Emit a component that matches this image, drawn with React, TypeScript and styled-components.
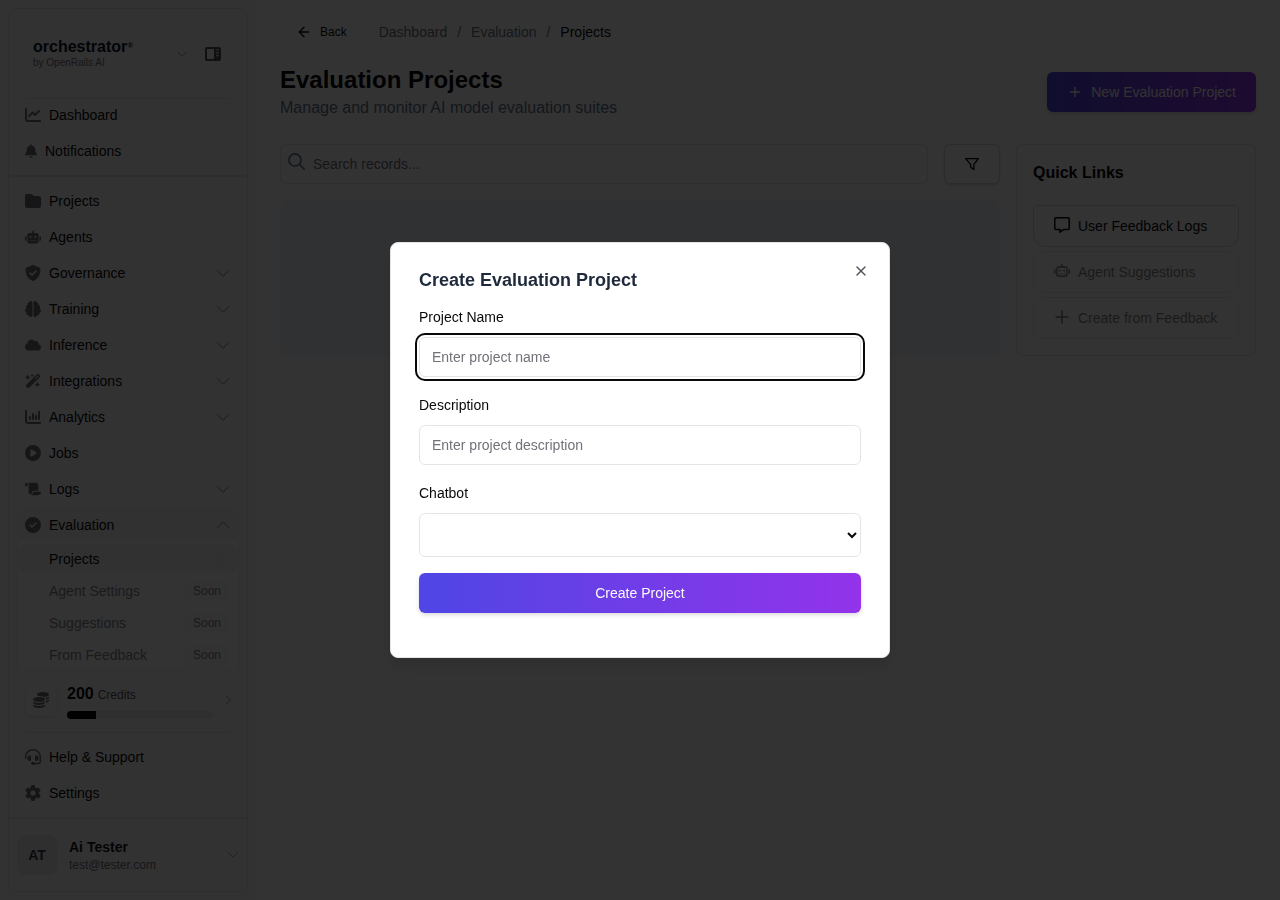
import React from "react";
import styled, { createGlobalStyle, css } from "styled-components";
import { ArrowLeft, Plus, X } from "lucide-react";
import {
  FaBell,
  FaBrain,
  FaChartColumn,
  FaChartLine,
  FaCircleCheck,
  FaCirclePlay,
  FaCloud,
  FaCoins,
  FaFolder,
  FaGear,
  FaHeadset,
  FaRobot,
  FaScroll,
  FaWandMagicSparkles,
} from "react-icons/fa6";

const GlobalStyle = createGlobalStyle`
  *, *::before, *::after { box-sizing: border-box; }
  body {
    margin: 0;
    background: #ffffff;
    color: #09090b;
    font-family: "Liberation Sans", Arial, sans-serif;
    font-size: 14px;
    line-height: 20px;
  }
  h1, h2, h3, p, ul { margin: 0; padding: 0; }
  ul { list-style: none; }
  button, input, select { font: inherit; color: inherit; }
  a { color: inherit; text-decoration: none; }
  svg { display: block; flex-shrink: 0; }
`;

/* ---------- icons ---------- */

const ChevronIcon = styled.svg<{ $turn?: number; $small?: boolean }>`
  width: ${(p) => (p.$small ? 10 : 14)}px;
  height: ${(p) => (p.$small ? 10 : 14)}px;
  fill: none;
  stroke: #71717a;
  stroke-linecap: round;
  stroke-linejoin: round;
  transform: rotate(${(p) => p.$turn ?? 0}deg);
`;

const Chevron = ({ turn, small }: { turn?: number; small?: boolean }) => (
  <ChevronIcon $turn={turn} $small={small} viewBox="0 0 14 14">
    <path d="M1 4.2 7 10.2 13 4.2" strokeWidth={small ? 1 : 0.8} />
  </ChevronIcon>
);

const PanelIcon = () => (
  <svg width="16" height="16" viewBox="0 0 16 16">
    <path
      fillRule="evenodd"
      d="M2 1h12a2 2 0 0 1 2 2v10a2 2 0 0 1-2 2H2a2 2 0 0 1-2-2V3a2 2 0 0 1 2-2Zm0 2v10h7V3Zm9 .6v1h3v-1Zm0 2.8v1h3v-1Zm0 2.8v1h3v-1Z"
      fill="currentColor"
    />
  </svg>
);

const ShieldCheckIcon = () => (
  <svg width="16" height="16" viewBox="0 0 16 16">
    <path
      d="M8 0c.2 0 .3 0 .4.1l5.9 2.5c.7.3 1.2 1 1.2 1.8 0 3.1-1.3 8.800-6.700 11.400a1.900 1.900 0 0 1-1.600 0C1.800 13.200.5 7.500.5 4.400c0-.8.5-1.500 1.200-1.800L7.600.1C7.700 0 7.800 0 8 0Z"
      fill="currentColor"
    />
    <path d="m5 8.100 2.100 2L11 6.100" fill="none" stroke="#fafafa" strokeWidth="1.500" strokeLinecap="round" strokeLinejoin="round" />
  </svg>
);

const SearchIcon = () => (
  <svg width="17" height="17" viewBox="0 0 16 16" fill="none" stroke="#64748b" strokeWidth="1.500" strokeLinecap="round">
    <circle cx="6.500" cy="6.500" r="5.700" />
    <path d="m10.800 10.800 4.400 4.400" />
  </svg>
);

const FilterIcon = () => (
  <svg width="16" height="16" viewBox="0 0 16 16" fill="none" stroke="currentColor" strokeWidth="1.300" strokeLinejoin="round">
    <path d="M1.600 2.600h12.800L9.900 8.400v5.200L6.600 11.200V8.400Z" />
  </svg>
);

const CommentIcon = () => (
  <svg width="16" height="16" viewBox="0 0 16 16" fill="none" stroke="currentColor" strokeWidth="1.500" strokeLinejoin="round">
    <path d="M1.800.8h12.400a1 1 0 0 1 1 1v9.800a1 1 0 0 1-1 1H9.300L6 15.200v-2.600H1.800a1 1 0 0 1-1-1V1.800a1 1 0 0 1 1-1Z" />
  </svg>
);

const RobotIcon = () => (
  <svg width="16" height="16" viewBox="0 0 16 16" fill="none" stroke="currentColor" strokeWidth="1.400" strokeLinecap="round">
    <rect x="2.900" y="4" width="10.200" height="9.300" rx="2" />
    <path d="M8 1.500v2.500M.7 7v3.200M15.300 7v3.200" />
    <path d="M5.300 11h.7M7.700 11h.7M10.100 11h.7" strokeWidth="1.100" />
    <circle cx="5.800" cy="7.600" r=".7" fill="currentColor" strokeWidth=".8" />
    <circle cx="10.200" cy="7.600" r=".7" fill="currentColor" strokeWidth=".8" />
  </svg>
);

const ThinPlusIcon = () => (
  <svg width="16" height="16" viewBox="0 0 16 16" fill="none" stroke="currentColor" strokeWidth="1.500" strokeLinecap="round">
    <path d="M8 2v12M2 8h12" />
  </svg>
);

/* ---------- shell ---------- */

const Shell = styled.div`
  display: flex;
  min-height: 100vh;
`;

const SidebarFrame = styled.aside`
  flex: 0 0 256px;
  height: 100vh;
  padding: 8px;
  background: #fafafa;
  position: sticky;
  top: 0;
`;

const SidebarCard = styled.div`
  display: flex;
  flex-direction: column;
  height: 100%;
  border: 1px solid #e5e5e5;
  border-radius: 8px;
  overflow: hidden;
`;

const Brand = styled.div`
  display: flex;
  align-items: center;
  justify-content: space-between;
  flex: 0 0 89px;
  padding: 0 26px 0 24px;
`;

const BrandName = styled.div`
  color: #0f172a;
  font-size: 16px;
  font-weight: 700;
  line-height: 18px;

  sup {
    font-size: 8px;
    line-height: 0;
    vertical-align: 4px;
  }
`;

const BrandBy = styled.div`
  color: #71717a;
  font-size: 10px;
  line-height: 14px;
`;

const BrandTools = styled.div`
  display: flex;
  align-items: center;
  gap: 18px;
`;

const IconButton = styled.button`
  display: flex;
  padding: 0;
  border: 0;
  background: none;
  color: #52525b;
  cursor: pointer;
`;

const Rule = styled.hr<{ $inset?: boolean }>`
  flex: 0 0 auto;
  width: auto;
  height: ${(p) => (p.$inset ? 1 : 2)}px;
  margin: ${(p) => (p.$inset ? "0 16px" : "0")};
  border: 0;
  background: #e5e5e5;
`;

const NavGroup = styled.ul<{ $scroll?: boolean; $flush?: boolean }>`
  display: flex;
  flex-direction: column;
  gap: 4px;
  flex: ${(p) => (p.$scroll ? "1 1 0" : "0 0 auto")};
  min-height: 0;
  padding: ${(p) => (p.$flush ? "0 8px 8px" : p.$scroll ? "8px 8px 0" : "8px")};
  overflow: hidden;
`;

const NavLink = styled.a<{ $open?: boolean }>`
  display: flex;
  align-items: center;
  gap: 8px;
  height: 32px;
  padding: 0 9px 0 8px;
  border-radius: 6px;
  background: ${(p) => (p.$open ? "#f4f4f5" : "transparent")};

  > svg:first-child {
    color: #71717a;
  }
`;

const NavLabel = styled.span`
  flex: 1;
`;

const SubNav = styled.ul`
  display: flex;
  flex-direction: column;
  gap: 4px;
  padding: 4px 1px;
  border: solid #f0f0f0;
  border-width: 0 1px;
  background: #ffffff;
`;

const SubLink = styled.a<{ $active?: boolean }>`
  display: flex;
  align-items: center;
  justify-content: space-between;
  height: 28px;
  padding: 0 8px 0 30px;
  border-radius: 6px;
  background: ${(p) => (p.$active ? "#f4f4f5" : "transparent")};
  color: ${(p) => (p.$active ? "#09090b" : "#84848a")};
`;

const FaintChevron = styled.span`
  opacity: 0.2;
`;

const Soon = styled.span`
  padding: 0 8px;
  border-radius: 4px;
  background: #f8f8f9;
  font-size: 12px;
  line-height: 20px;
`;

const Credits = styled.a`
  display: flex;
  align-items: center;
  gap: 10px;
  flex: 0 0 64px;
  padding: 0 14px 0 16px;
`;

const CoinTile = styled.span`
  display: flex;
  align-items: center;
  justify-content: center;
  width: 32px;
  height: 32px;
  border-radius: 6px;
  background: #fafafa;
  box-shadow: 0 1px 3px rgba(0, 0, 0, 0.15);
  color: #71717a;
`;

const CreditInfo = styled.span`
  flex: 1;
`;

const CreditText = styled.span`
  display: flex;
  align-items: baseline;
  gap: 4px;
  margin-bottom: 4px;
  color: #52525b;
  font-size: 12px;
  line-height: 24px;

  strong {
    color: #09090b;
    font-size: 16px;
  }
`;

const Meter = styled.span`
  display: block;
  height: 8px;
  border-radius: 4px;
  background: #e8e8ea;
  overflow: hidden;
`;

const MeterFill = styled.span`
  display: block;
  height: 100%;
  background: #09090b;
`;

const Account = styled.button`
  display: flex;
  align-items: center;
  gap: 12px;
  flex: 0 0 72px;
  padding: 0 9px 0 8px;
  border: 0;
  background: none;
  text-align: left;
  cursor: pointer;
`;

const Avatar = styled.span`
  display: flex;
  align-items: center;
  justify-content: center;
  width: 40px;
  height: 40px;
  border-radius: 8px;
  background: #e9e9eb;
  color: #3f3f46;
  font-weight: 700;
`;

const AccountText = styled.span`
  flex: 1;
  color: #71717a;
  font-size: 12px;
  line-height: 16px;

  strong {
    display: block;
    color: #18181b;
    font-size: 14px;
    line-height: 20px;
  }
`;

/* ---------- main ---------- */

const Main = styled.main`
  flex: 1;
  min-width: 0;
  padding: 16px 24px;
`;

const TopBar = styled.div`
  display: flex;
  align-items: center;
  gap: 16px;
  margin-bottom: 16px;
`;

const BackButton = styled.button`
  display: flex;
  align-items: center;
  gap: 8px;
  height: 32px;
  padding: 0 16px;
  border: 0;
  background: none;
  font-size: 12px;
  cursor: pointer;
`;

const Crumbs = styled.nav`
  display: flex;
  gap: 10px;
  color: #71717a;
`;

const CrumbLink = styled.a<{ $slate?: boolean }>`
  color: ${(p) => (p.$slate ? "#64748b" : "#71717a")};
`;

const CrumbCurrent = styled.span`
  color: #09090b;
`;

const PageHead = styled.header`
  display: flex;
  align-items: center;
  justify-content: space-between;
  margin-bottom: 24px;
`;

const PageTitle = styled.h1`
  color: #09090b;
  font-size: 24px;
  line-height: 32px;
`;

const PageIntro = styled.p`
  color: #64748b;
  font-size: 16px;
  line-height: 24px;
`;

const PrimaryButton = styled.button<{ $wide?: boolean }>`
  display: flex;
  align-items: center;
  justify-content: center;
  gap: 8px;
  width: ${(p) => (p.$wide ? "100%" : "auto")};
  height: 40px;
  padding: 0 20px;
  border: 0;
  border-radius: 6px;
  background: linear-gradient(to right, #4f46e5, #9333ea);
  box-shadow: 0 2px 4px rgba(0, 0, 0, 0.15);
  color: #fafafa;
  cursor: pointer;
`;

const Columns = styled.div`
  display: grid;
  grid-template-columns: minmax(0, 1fr) 240px;
  gap: 16px;
`;

const Records = styled.section`
  display: flex;
  flex-direction: column;
  gap: 16px;
`;

const SearchRow = styled.div`
  display: flex;
  gap: 16px;
`;

const SearchBox = styled.label`
  display: flex;
  flex: 1;
  gap: 8px;
  height: 40px;
  padding: 0 7px;
  border: 1px solid #e5e5e5;
  border-radius: 6px;

  svg {
    margin-top: 8px;
  }
`;

const SearchInput = styled.input`
  flex: 1;
  min-width: 0;
  padding: 0;
  border: 0;
  background: none;
  outline: none;

  &::placeholder {
    color: #71717a;
    opacity: 1;
  }
`;

const FilterButton = styled.button`
  display: flex;
  align-items: center;
  justify-content: center;
  width: 56px;
  height: 40px;
  border: 1px solid #dcdcdf;
  border-radius: 6px;
  background: #ffffff;
  box-shadow: 0 1px 2px rgba(0, 0, 0, 0.15);
  cursor: pointer;
`;

const EmptyPanel = styled.div`
  flex: 1;
  border-radius: 6px;
  background: #f1f5f9;
`;

const QuickCard = styled.section`
  padding: 16px;
  border: 1px solid #e5e5e5;
  border-radius: 6px;
`;

const QuickTitle = styled.h3`
  margin-bottom: 20px;
  font-size: 16px;
  line-height: 24px;
`;

const QuickList = styled.div`
  display: flex;
  flex-direction: column;
  gap: 4px;
`;

const QuickButton = styled.button`
  display: flex;
  align-items: center;
  gap: 8px;
  height: 42px;
  padding: 0 20px;
  border: 1px solid #d4d4d8;
  border-radius: 12px;
  background: none;
  white-space: nowrap;
  cursor: pointer;

  svg {
    margin-bottom: 2px;
  }
  &:first-child {
    border-top-left-radius: 6px;
    border-top-right-radius: 6px;
  }
  &:last-child {
    border-bottom-left-radius: 6px;
    border-bottom-right-radius: 6px;
  }
  &:disabled {
    opacity: 0.5;
  }
`;

/* ---------- dialog ---------- */

const Overlay = styled.div`
  position: fixed;
  inset: 0;
  display: flex;
  align-items: center;
  justify-content: center;
  background: rgba(0, 0, 0, 0.8);
`;

const Dialog = styled.div`
  position: relative;
  width: 500px;
  max-width: 100%;
  padding: 28px 28px 44px;
  border: 1px solid #e4e4e7;
  border-radius: 8px;
  background: #ffffff;
  box-shadow: 0 10px 15px rgba(0, 0, 0, 0.1);
`;

const CloseButton = styled(IconButton)`
  position: absolute;
  top: 20px;
  right: 20px;
  color: #52525b;
`;

const DialogTitle = styled.h2`
  margin-bottom: 18px;
  color: #1e293b;
  font-size: 18px;
  line-height: 18px;
`;

const Field = styled.div`
  display: flex;
  flex-direction: column;
  gap: 10px;
  margin-bottom: 18px;

  &:last-of-type {
    margin-bottom: 16px;
  }
`;

const control = css`
  width: 100%;
  border: 1px solid #e4e4e7;
  border-radius: 6px;
  background: #ffffff;

  &:focus {
    outline: 2px solid #09090b;
    outline-offset: 2px;
  }
`;

const TextInput = styled.input`
  ${control}
  height: 40px;
  padding: 0 12px;

  &::placeholder {
    color: #71717a;
    opacity: 1;
  }
`;

const SelectInput = styled.select`
  ${control}
  height: 44px;
`;

/* ---------- data ---------- */

type NavEntry = { label: string; icon: React.ReactNode; fold?: boolean; open?: boolean };

const mainNav: NavEntry[] = [
  { label: "Projects", icon: <FaFolder size={16} /> },
  { label: "Agents", icon: <FaRobot size={16} /> },
  { label: "Governance", icon: <ShieldCheckIcon />, fold: true },
  { label: "Training", icon: <FaBrain size={16} />, fold: true },
  { label: "Inference", icon: <FaCloud size={16} />, fold: true },
  { label: "Integrations", icon: <FaWandMagicSparkles size={16} />, fold: true },
  { label: "Analytics", icon: <FaChartColumn size={16} />, fold: true },
  { label: "Jobs", icon: <FaCirclePlay size={16} /> },
  { label: "Logs", icon: <FaScroll size={16} />, fold: true },
  { label: "Evaluation", icon: <FaCircleCheck size={16} />, fold: true, open: true },
];

const soonLinks = ["Agent Settings", "Suggestions", "From Feedback"];

const NavItem = ({ label, icon, fold, open }: NavEntry) => (
  <NavLink href="#" $open={open}>
    {icon}
    <NavLabel>{label}</NavLabel>
    {fold && <Chevron turn={open ? 180 : 0} />}
  </NavLink>
);

const Sidebar = () => (
  <SidebarFrame>
    <SidebarCard>
      <Brand>
        <div>
          <BrandName>
            orchestrator<sup>®</sup>
          </BrandName>
          <BrandBy>by OpenRails AI</BrandBy>
        </div>
        <BrandTools>
          <Chevron small />
          <IconButton aria-label="Toggle sidebar">
            <PanelIcon />
          </IconButton>
        </BrandTools>
      </Brand>
      <Rule $inset />
      <NavGroup $flush>
        <li>
          <NavItem label="Dashboard" icon={<FaChartLine size={16} />} />
        </li>
        <li>
          <NavItem label="Notifications" icon={<FaBell width={12} size={undefined} style={{ width: 12, height: 14 }} />} />
        </li>
      </NavGroup>
      <Rule />
      <NavGroup $scroll>
        {mainNav.map((item) => (
          <li key={item.label}>
            <NavItem {...item} />
            {item.open && (
              <SubNav>
                <li>
                  <SubLink href="#" $active>
                    Projects
                    <FaintChevron>
                      <Chevron turn={-90} />
                    </FaintChevron>
                  </SubLink>
                </li>
                {soonLinks.map((label) => (
                  <li key={label}>
                    <SubLink href="#">
                      {label}
                      <Soon>Soon</Soon>
                    </SubLink>
                  </li>
                ))}
              </SubNav>
            )}
          </li>
        ))}
      </NavGroup>
      <Credits href="#">
        <CoinTile>
          <FaCoins size={16} />
        </CoinTile>
        <CreditInfo>
          <CreditText>
            <strong>200</strong> Credits
          </CreditText>
          <Meter>
            <MeterFill style={{ width: "20%" }} />
          </Meter>
        </CreditInfo>
        <Chevron turn={-90} small />
      </Credits>
      <Rule $inset />
      <NavGroup>
        <li>
          <NavItem label="Help & Support" icon={<FaHeadset size={16} />} />
        </li>
        <li>
          <NavItem label="Settings" icon={<FaGear size={16} />} />
        </li>
      </NavGroup>
      <Rule />
      <Account>
        <Avatar>AT</Avatar>
        <AccountText>
          <strong>Ai Tester</strong>
          test@tester.com
        </AccountText>
        <Chevron small />
      </Account>
    </SidebarCard>
  </SidebarFrame>
);

const CreateDialog = () => (
  <Overlay>
    <Dialog role="dialog" aria-modal="true" aria-labelledby="dialog-title">
      <DialogTitle id="dialog-title">Create Evaluation Project</DialogTitle>
      <form onSubmit={(e) => e.preventDefault()}>
        <Field>
          <label htmlFor="project-name">Project Name</label>
          <TextInput id="project-name" placeholder="Enter project name" autoFocus />
        </Field>
        <Field>
          <label htmlFor="project-description">Description</label>
          <TextInput id="project-description" placeholder="Enter project description" />
        </Field>
        <Field>
          <label htmlFor="project-chatbot">Chatbot</label>
          <SelectInput id="project-chatbot" />
        </Field>
        <PrimaryButton $wide type="submit">
          Create Project
        </PrimaryButton>
      </form>
      <CloseButton aria-label="Close">
        <X size={16} />
      </CloseButton>
    </Dialog>
  </Overlay>
);

export default function App() {
  return (
    <>
      <GlobalStyle />
      <Shell>
        <Sidebar />
        <Main>
          <TopBar>
            <BackButton>
              <ArrowLeft size={16} />
              Back
            </BackButton>
            <Crumbs aria-label="Breadcrumb">
              <CrumbLink href="#">Dashboard</CrumbLink>
              <span>/</span>
              <CrumbLink href="#" $slate>
                Evaluation
              </CrumbLink>
              <span>/</span>
              <CrumbCurrent>Projects</CrumbCurrent>
            </Crumbs>
          </TopBar>
          <PageHead>
            <div>
              <PageTitle>Evaluation Projects</PageTitle>
              <PageIntro>Manage and monitor AI model evaluation suites</PageIntro>
            </div>
            <PrimaryButton>
              <Plus size={16} />
              New Evaluation Project
            </PrimaryButton>
          </PageHead>
          <Columns>
            <Records>
              <SearchRow>
                <SearchBox>
                  <SearchIcon />
                  <SearchInput type="search" placeholder="Search records..." aria-label="Search records" />
                </SearchBox>
                <FilterButton aria-label="Filter">
                  <FilterIcon />
                </FilterButton>
              </SearchRow>
              <EmptyPanel />
            </Records>
            <QuickCard>
              <QuickTitle>Quick Links</QuickTitle>
              <QuickList>
                <QuickButton>
                  <CommentIcon />
                  User Feedback Logs
                </QuickButton>
                <QuickButton disabled>
                  <RobotIcon />
                  Agent Suggestions
                </QuickButton>
                <QuickButton disabled>
                  <ThinPlusIcon />
                  Create from Feedback
                </QuickButton>
              </QuickList>
            </QuickCard>
          </Columns>
        </Main>
      </Shell>
      <CreateDialog />
    </>
  );
}
